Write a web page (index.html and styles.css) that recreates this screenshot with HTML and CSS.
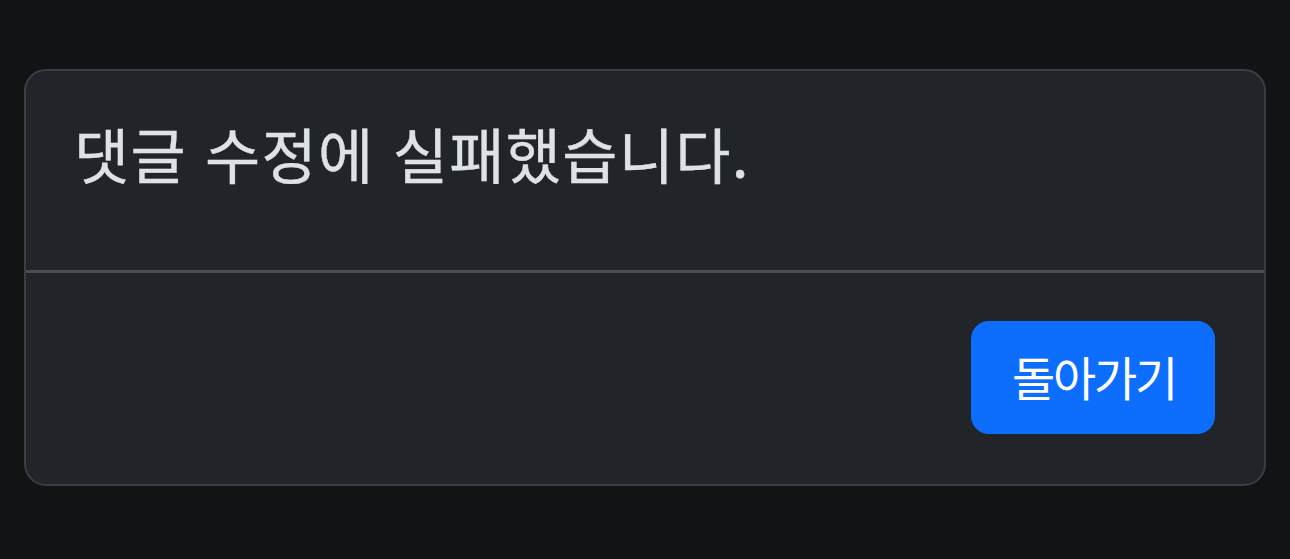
FILE: index.html
```html
<!DOCTYPE html>
<html lang="ko">
<head>
<meta charset="utf-8">
<link rel="stylesheet" href="styles.css">
</head>
<body>
<div class="page">
  <div class="modal">
    <div class="modal-body">
      <h5 class="message">댓글 수정에 실패했습니다.</h5>
    </div>
    <div class="modal-footer">
      <button class="btn">돌아가기</button>
    </div>
  </div>
</div>
</body>
</html>
```
FILE: styles.css
```css
html, body {
  margin: 0;
  padding: 0;
  background: #111315;
}
body {
  font-family: "Noto Sans CJK KR", "Noto Sans", sans-serif;
  color: #dee2e6;
}
.page {
  padding: 69px 24px 0 24px;
}
.modal {
  background: #212529;
  border: 2px solid #3a3d41;
  border-radius: 22px;
  height: 417px;
  box-sizing: border-box;
  display: flex;
  flex-direction: column;
}
.modal-body {
  padding: 46px 48px 0 48px;
  height: 202px;
  box-sizing: border-box;
  border-bottom: 3px solid #4a4e52;
}
.message {
  margin: 0;
  font-size: 60px;
  font-weight: 400;
  line-height: 72px;
  letter-spacing: 1.3px;
  -webkit-text-stroke: 0.4px #dee2e6;
}
.modal-footer {
  flex: 1;
  display: flex;
  justify-content: flex-end;
  align-items: center;
  padding: 0 49px 2px 0;
}
.btn {
  background: #0d6efd;
  color: #ffffff;
  border: none;
  border-radius: 18px;
  width: 244px;
  height: 113px;
  font-family: "Noto Sans CJK KR", "Noto Sans", sans-serif;
  font-size: 47px;
  letter-spacing: -2.3px;
  padding: 0 0 4px 2px;
}
```
